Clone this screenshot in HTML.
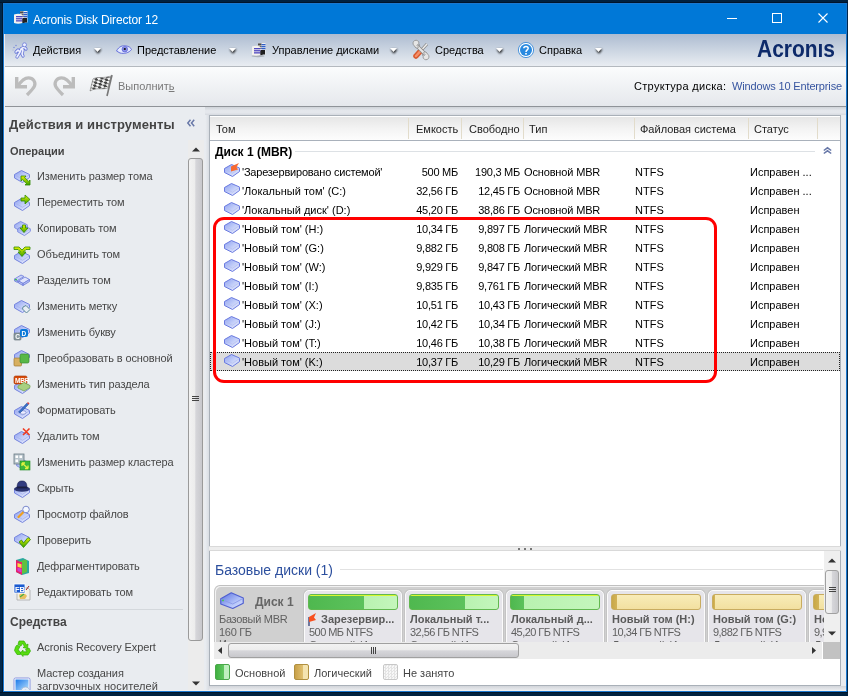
<!DOCTYPE html><html><head><meta charset="utf-8"><style>
*{margin:0;padding:0;box-sizing:border-box}
html,body{width:848px;height:696px;overflow:hidden;background:#00284c;font-family:"Liberation Sans",sans-serif;font-size:11px;color:#000;position:relative}
.a{position:absolute}
.t{position:absolute;white-space:nowrap;line-height:13px}
svg{position:absolute;overflow:visible}
.it{left:37px;color:#474747;letter-spacing:-0.1px}
.r{text-align:right}
.hd{color:#222}
.pc{position:absolute;width:98px;height:70px;background:#e6e5ea;border:1px solid #fbfbfb;border-radius:5px;box-shadow:0 0 0 1px #c4c4c4}
.bar{position:absolute;left:3px;top:3px;width:90px;height:16px;border-radius:3px}
.pn{position:absolute;left:4px;top:22px;font-weight:bold;color:#5a5a5a;font-size:11px;line-height:13px;white-space:nowrap}
.ps{position:absolute;left:4px;top:35px;color:#606060;line-height:13px;white-space:nowrap;letter-spacing:-0.55px}
</style></head><body><div style="position:absolute;left:0;top:0;width:848px;height:696px;overflow:hidden;will-change:transform">

<svg width="0" height="0" style="position:absolute">
<defs>
 <filter id="blr" x="-50%" y="-50%" width="200%" height="200%"><feGaussianBlur stdDeviation="0.9"/></filter>
 <linearGradient id="gs" x1="0" y1="0" x2="1" y2="1">
  <stop offset="0" stop-color="#8a9ef0"/><stop offset="0.5" stop-color="#c0ccf8"/><stop offset="1" stop-color="#eceffe"/>
 </linearGradient>
 <linearGradient id="gg" x1="0" y1="0" x2="0" y2="1">
  <stop offset="0" stop-color="#e8f400"/><stop offset="1" stop-color="#3aa000"/>
 </linearGradient>
 <symbol id="slab" viewBox="0 0 16 13" overflow="visible">
  <path d="M0.5 4.5 L7.5 0.5 L15.5 4.5 L15.5 7.5 L8.5 12.5 L0.5 8 Z" fill="url(#gs)" stroke="#7584de" stroke-width="1" stroke-linejoin="round"/>
  <path d="M1 5 L8.5 9.3 L15.5 4.8" fill="none" stroke="#aab4ec" stroke-width="0.8"/>
 </symbol>
 <symbol id="i-resize" overflow="visible"><use href="#slab" x="1" y="3" width="16" height="13"/>
  <path d="M8 9 L13 9 L11.6 10.4 L15.6 14.4 L17 13 L17 18 L12 18 L13.4 16.6 L9.4 12.6 L8 14 Z" fill="url(#gg)" stroke="#2f8a00" stroke-width="0.8"/></symbol>
 <symbol id="i-move" overflow="visible"><use href="#slab" x="1" y="5" width="16" height="13"/>
  <path d="M8 5 L12 5 L12 2 L17 6.5 L12 11 L12 8 L8 8 Z" fill="url(#gg)" stroke="#2f8a00" stroke-width="0.8"/></symbol>
 <symbol id="i-copy" overflow="visible"><use href="#slab" x="1" y="2" width="14" height="11"/><use href="#slab" x="4" y="6" width="14" height="11"/>
  <path d="M9.5 6 L12.5 6 L12.5 9 L15 9 L11 13.5 L7 9 L9.5 9 Z" fill="url(#gg)" stroke="#2f8a00" stroke-width="0.8"/></symbol>
 <symbol id="i-merge" overflow="visible"><use href="#slab" x="1" y="6" width="16" height="13"/>
  <path d="M1 2 L6 2 L9 5 L12 2 L17 2 L17 4.5 L13 4.5 L10.5 7 L13 7 L9 11.5 L5 7 L7.5 7 L5 4.5 L1 4.5 Z" fill="url(#gg)" stroke="#2f8a00" stroke-width="0.8"/></symbol>
 <symbol id="i-split" overflow="visible">
  <path d="M1.5 8 L8 4 L11 5.5 L4.5 9.5 Z" fill="#c9d2f8" stroke="#7482dc" stroke-width="0.9"/>
  <path d="M1.5 8 L4.5 9.5 L4.5 11.5 L1.5 10 Z" fill="#aab6ee" stroke="#7482dc" stroke-width="0.9"/>
  <path d="M5.5 10 L12 6 L16.5 8.5 L10 12.5 Z" fill="#dfe4fb" stroke="#7482dc" stroke-width="0.9"/>
  <path d="M5.5 10 L10 12.5 L10 14.5 L5.5 12 Z M10 12.5 L16.5 8.5 L16.5 10.5 L10 14.5 Z" fill="#b5c0f0" stroke="#7482dc" stroke-width="0.9"/>
  <circle cx="3" cy="8.6" r="0.9" fill="#3c3"/></symbol>
 <symbol id="i-label" overflow="visible"><use href="#slab" x="1" y="3" width="16" height="13"/>
  <path d="M10 10 L13 8.5 L17 12.5 L13.5 16 L9.5 12 Z" fill="#e8eef4" stroke="#5d8a98" stroke-width="1"/></symbol>
 <symbol id="i-letter" overflow="visible"><use href="#slab" x="1" y="2" width="16" height="13"/>
  <rect x="1" y="10" width="7" height="7" rx="1" fill="#8a9aa0" stroke="#5a6a70" stroke-width="0.6"/><text x="2.3" y="16" font-size="6.5" font-weight="bold" fill="#fff" font-family="Liberation Sans">C</text>
  <rect x="7" y="6" width="8" height="8" rx="2" fill="#0a78d8"/><text x="8.6" y="12.6" font-size="6.5" font-weight="bold" fill="#fff" font-family="Liberation Sans">D</text></symbol>
 <symbol id="i-convert" overflow="visible"><use href="#slab" x="1" y="1" width="16" height="13"/>
  <rect x="1" y="9" width="7.5" height="8" rx="1" fill="#d8b060" stroke="#a07830" stroke-width="0.7"/>
  <rect x="7" y="5" width="9" height="9" rx="1.5" fill="#58b848" stroke="#3a8a30" stroke-width="0.7"/></symbol>
 <symbol id="i-ptype" overflow="visible"><use href="#slab" x="1" y="6" width="16" height="13"/>
  <rect x="1" y="1" width="13" height="8" rx="1.5" fill="#d84a08" stroke="#a03000" stroke-width="0.6"/>
  <text x="2" y="8" font-size="6.6" font-weight="bold" fill="#fff" font-family="Liberation Sans" letter-spacing="-0.3">MBR</text>
  <path d="M5 11 L11 7.5 L17 10.5 L17 12.5 L11 16 L5 13 Z" fill="#a8d080" stroke="#78a850" stroke-width="0.8"/></symbol>
 <symbol id="i-format" overflow="visible"><use href="#slab" x="1" y="5" width="16" height="13"/>
  <ellipse cx="10" cy="11.5" rx="3" ry="1.8" fill="#eef" stroke="#8090d0" stroke-width="0.8"/>
  <path d="M5.5 11 L14 2 L15.5 3.5 L7 12 Z" fill="#3a70c8" stroke="#1d4a98" stroke-width="0.5"/><path d="M14 2 L15 1 L16.5 2.5 L15.5 3.5 Z" fill="#e04040"/></symbol>
 <symbol id="i-delete" overflow="visible"><use href="#slab" x="1" y="4" width="16" height="13"/>
  <path d="M10 1.5 L16.5 8 M16.5 1.5 L10 8" stroke="#f03a20" stroke-width="1.6" fill="none"/></symbol>
 <symbol id="i-cluster" overflow="visible"><use href="#slab" x="3" y="6" width="14" height="11"/>
  <rect x="1" y="1" width="10" height="10" fill="#b8c4cc" stroke="#6a7a84" stroke-width="0.8"/>
  <rect x="2.5" y="2.5" width="2.5" height="2.5" fill="#fff"/><rect x="6.5" y="2.5" width="2.5" height="2.5" fill="#fff"/><rect x="2.5" y="6.5" width="2.5" height="2.5" fill="#fff"/>
  <rect x="7" y="8" width="10" height="9" fill="#3cb83c" stroke="#208a20" stroke-width="0.6"/>
  <path d="M9 10 L15 15.5 M9 10 L12 10 M9 10 L9 13 M15 15.5 L12 15.5 M15 15.5 L15 12.5" stroke="#e0f040" stroke-width="1.3" fill="none"/></symbol>
 <symbol id="i-hide" overflow="visible"><use href="#slab" x="1" y="6" width="16" height="13"/>
  <ellipse cx="9" cy="10" rx="8" ry="2.8" fill="#2a3470"/>
  <path d="M4 9.5 C4 3 6 2 9 2 C12 2 14 3 14 9.5 Z" fill="#323c80" stroke="#1a2050" stroke-width="0.6"/>
  <path d="M4.2 7.5 L13.8 7.5 L13.9 9 L4.1 9 Z" fill="#1a1e40"/></symbol>
 <symbol id="i-browse" overflow="visible"><use href="#slab" x="1" y="5" width="16" height="13"/>
  <path d="M5.5 12 L10.5 7" stroke="#f0a020" stroke-width="2.2" stroke-linecap="round"/>
  <circle cx="13" cy="4.5" r="3.3" fill="#f4f8ff" stroke="#7a88cc" stroke-width="1"/></symbol>
 <symbol id="i-check" overflow="visible"><use href="#slab" x="1" y="2" width="16" height="13"/>
  <path d="M6 11 L8.5 9 L10.5 12 L15 6.5 L17.5 8.5 L10.5 16.5 Z" fill="url(#gg)" stroke="#2f8a00" stroke-width="0.8"/></symbol>
 <symbol id="i-defrag" overflow="visible">
  <path d="M3 3 L10 1 L16 4 L16 16 L9 18 L3 15 Z" fill="#2aa8a0"/>
  <path d="M3 3 L9 5 L9 18 L3 15 Z" fill="#e8206a"/>
  <path d="M5 5 L12 2.5 L14 3.5 L14 15 L9 17 L9 5 Z" fill="#60c040"/>
  <path d="M4.5 6 L8.5 7.2 L8.5 11 L4.5 9.8 Z" fill="#f8e040"/>
  <path d="M4.5 10.5 L8.5 11.7 L8.5 15.5 L4.5 14 Z" fill="#d040d0"/></symbol>
 <symbol id="i-edit" overflow="visible">
  <path d="M4 5 L15 5 L17 7 L17 17 L4 17 Z" fill="#f4f0e4" stroke="#a0a0a0" stroke-width="0.7"/>
  <path d="M6 12 C8 10 12 10 14 13 L12 16 L7 16 Z" fill="#e8c060"/><path d="M7 14 L11 11" stroke="#40b040" stroke-width="1.2"/>
  <rect x="1" y="1" width="11" height="9" fill="#1a5ad0" stroke="#fff" stroke-width="0.8"/>
  <text x="2" y="8.5" font-size="7.5" font-weight="bold" fill="#fff" font-family="Liberation Sans">FB</text>
  <path d="M13 7 L16 3" stroke="#a02020" stroke-width="1"/></symbol>
 <symbol id="i-recycle" overflow="visible">
  <g fill="#58dc10" stroke="#30b000" stroke-width="0.7">
  <path d="M6 3 L11 3 L13.5 7 L15 6 L14.5 10.5 L10 9.5 L11.5 8.6 L9.5 5.3 L8 8 L5 6.3 Z"/>
  <path d="M16 10 L17.5 13 L15 17 L10 17 L10 18.5 L7.2 15.2 L10 12 L10 13.8 L14 13.8 L12.5 11.5 Z"/>
  <path d="M2.5 9 L4 7 L7 8.5 L5 12 L7.5 14 L7.5 16.5 L4 16.5 L1.5 12.5 Z"/>
  </g></symbol>
 <symbol id="i-media" overflow="visible">
  <rect x="1" y="1" width="16" height="14" rx="1.5" fill="#fff" stroke="#8a96e0" stroke-width="1"/>
  <rect x="2.5" y="2.5" width="13" height="11" fill="url(#gm)"/>
  <circle cx="12.5" cy="14.5" r="4.5" fill="#e8eef8" stroke="#9ab0c8" stroke-width="0.7"/><circle cx="12.5" cy="14.5" r="1.5" fill="none" stroke="#9ab0c8" stroke-width="0.7"/></symbol>
 <linearGradient id="gdisk" x1="0" y1="0" x2="1" y2="1"><stop offset="0" stop-color="#5a70e0"/><stop offset="0.6" stop-color="#b0c0f8"/><stop offset="1" stop-color="#e0e8ff"/></linearGradient>
 <linearGradient id="gm" x1="0" y1="0" x2="1" y2="1"><stop offset="0" stop-color="#1a78e8"/><stop offset="1" stop-color="#b8e0ff"/></linearGradient>
 <linearGradient id="gvol" x1="0" y1="0" x2="1" y2="1">
  <stop offset="0" stop-color="#8a9ef0"/><stop offset="0.5" stop-color="#c0ccf8"/><stop offset="1" stop-color="#eceffe"/>
 </linearGradient>
 <symbol id="vol" overflow="visible">
  <path d="M0.5 4.5 L7.5 0.5 L15.5 4 L15.5 7.5 L8.5 12.5 L0.5 8.5 Z" fill="url(#gvol)" stroke="#6a7ae0" stroke-width="1" stroke-linejoin="round"/>
  <path d="M1 5.2 L8.5 9.3 L15.3 4.6" fill="none" stroke="#b4bdee" stroke-width="0.7"/>
 </symbol>
</defs></svg>

<div class="a" style="left:3px;top:3px;width:844px;height:689px;background:#e9ecf0;border:1px solid #1a78d0"></div>
<div class="a" style="left:4px;top:4px;width:842px;height:30px;background:#0078d7"></div>
<div class="t" style="left:33px;top:12.5px;color:#fff;font-size:12px;line-height:14px;letter-spacing:-0.15px">Acronis Disk Director 12</div>
<div class="a" style="left:4px;top:34px;width:842px;height:32px;background:linear-gradient(#adbcd1,#e9edf2)"></div>
<div class="a" style="left:4px;top:66px;width:842px;height:1px;background:#b4b9bf"></div>
<div class="a" style="left:4px;top:67px;width:842px;height:39px;background:linear-gradient(#fbfcfd,#e5e8ec)"></div>
<div class="a" style="left:4px;top:106px;width:842px;height:1px;background:#8f9398"></div>
<div class="t" style="left:33px;top:44px">Действия</div>
<div class="t" style="left:137px;top:44px">Представление</div>
<div class="t" style="left:272px;top:44px">Управление дисками</div>
<div class="t" style="left:435px;top:44px">Средства</div>
<div class="t" style="left:539px;top:44px">Справка</div>
<svg style="left:0;top:0" width="848" height="70"><text x="757" y="56.5" font-family="Liberation Sans" font-weight="bold" font-size="23" fill="#0d2a6a" textLength="78" lengthAdjust="spacingAndGlyphs">Acronıs</text></svg>
<div class="t" style="left:118px;top:80px;color:#7a7a7a">Выполнит<u>ь</u></div>
<div class="t" style="left:634px;top:80px;letter-spacing:0.3px">Структура диска:</div>
<div class="t" style="left:732px;top:80px;color:#3755a0;letter-spacing:-0.15px">Windows 10 Enterprise</div>
<svg style="left:14px;top:11px" width="14" height="13"><rect x="6" y="0" width="7.5" height="11.5" fill="#f0f0f0"/><rect x="6" y="0.5" width="3.5" height="1.3" fill="#222"/><rect x="6" y="2.6" width="3.5" height="1.3" fill="#222"/><rect x="6" y="4.7" width="3.5" height="1.3" fill="#222"/><rect x="9.5" y="1" width="4" height="1.3" fill="#2f5fc8"/><rect x="9.5" y="3" width="4" height="1.3" fill="#2f5fc8"/><rect x="9.5" y="5" width="4" height="1.3" fill="#2f5fc8"/><rect x="8" y="7" width="5" height="4.5" fill="#1e1e1e"/><path d="M0 3.5 Q4 2 8.5 3.5 L8.5 12 Q4 13.5 0 12 Z" fill="#f4f2ee"/><rect x="2" y="5" width="6.5" height="1.3" fill="#5048c0"/><rect x="2" y="7.1" width="6.5" height="1.3" fill="#5048c0"/><rect x="2" y="9.2" width="6.5" height="1.3" fill="#5048c0"/><rect x="8.5" y="8" width="2" height="4" fill="#222"/></svg>
<div class="a" style="left:727px;top:18px;width:10px;height:1px;background:#fff"></div>
<div class="a" style="left:772px;top:13px;width:10px;height:10px;border:1px solid #fff"></div>
<svg style="left:818px;top:13px" width="10" height="10"><path d="M0.5 0.5 L9.5 9.5 M9.5 0.5 L0.5 9.5" stroke="#fff" stroke-width="1.1"/></svg>
<svg style="left:12px;top:42px" width="16" height="16"><g fill="none" stroke-linecap="round" stroke-linejoin="round"><path d="M5 15 L8 10 L9 7 L11 8 L10 12 L11 14 M8 10 L6 8 L4 10 M9 7 L12 5 L14 7" stroke="#6a7ad8" stroke-width="3.2"/><path d="M5 15 L8 10 L9 7 L11 8 L10 12 L11 14 M8 10 L6 8 L4 10 M9 7 L12 5 L14 7" stroke="#eef0ff" stroke-width="1.6"/></g><circle cx="12.5" cy="2.8" r="2" fill="#eef0ff" stroke="#6a7ad8" stroke-width="0.8"/><circle cx="4" cy="3.5" r="0.8" fill="#8090d8"/><circle cx="2" cy="5.5" r="0.8" fill="#8090d8"/><circle cx="1" cy="8" r="0.6" fill="#a0a8e0"/></svg>
<svg style="left:116px;top:45px" width="16" height="9"><path d="M0.5 6 C3 1 7 0.5 9.5 0.8 C13 1.2 15 3 15.5 4.5 C13 8 8 9 4 8 Z" fill="#e4eaff" stroke="#5a64d8" stroke-width="0.9"/><circle cx="8.8" cy="4.2" r="2.8" fill="#8a90e8" stroke="#5058d0" stroke-width="0.6"/><circle cx="8.8" cy="4" r="1.1" fill="#111"/></svg>
<svg style="left:252px;top:43px" width="14" height="14"><ellipse cx="6" cy="13" rx="6.5" ry="1.2" fill="#8a9098" opacity="0.6"/><rect x="6" y="0" width="7.5" height="11.5" fill="#f0f0f0"/><rect x="6" y="0.5" width="3.5" height="1.3" fill="#222"/><rect x="6" y="2.6" width="3.5" height="1.3" fill="#222"/><rect x="6" y="4.7" width="3.5" height="1.3" fill="#222"/><rect x="9.5" y="1" width="4" height="1.3" fill="#2f5fc8"/><rect x="9.5" y="3" width="4" height="1.3" fill="#2f5fc8"/><rect x="9.5" y="5" width="4" height="1.3" fill="#2f5fc8"/><rect x="8" y="7" width="5" height="4.5" fill="#1e1e1e"/><path d="M0 3.5 Q4 2 8.5 3.5 L8.5 12 Q4 13.5 0 12 Z" fill="#f4f2ee"/><rect x="2" y="5" width="6.5" height="1.3" fill="#5048c0"/><rect x="2" y="7.1" width="6.5" height="1.3" fill="#5048c0"/><rect x="2" y="9.2" width="6.5" height="1.3" fill="#5048c0"/><rect x="8.5" y="8" width="2" height="4" fill="#222"/></svg>
<svg style="left:413px;top:42px" width="16" height="16"><path d="M14 2 L8.5 8" stroke="#8a8a8a" stroke-width="3"/><path d="M14 2 L8.5 8" stroke="#eee" stroke-width="1.5"/><path d="M7.5 9 L3 14" stroke="#d85a30" stroke-width="5.5" stroke-linecap="round"/><path d="M7.5 9 L3 14" stroke="#f6906a" stroke-width="2.5" stroke-linecap="round"/><path d="M3.5 3.5 L12.5 12.5" stroke="#8a8a8a" stroke-width="3.8" stroke-linecap="round"/><path d="M3.5 3.5 L12.5 12.5" stroke="#e6e6e6" stroke-width="2.2" stroke-linecap="round"/><path d="M1 3.5 A3 3 0 1 1 6 1.2 L4 3.5 L4.5 4.2 L6.5 2.5 A3 3 0 0 1 3 6 Z" fill="#e6e6e6" stroke="#8a8a8a" stroke-width="0.8"/><path d="M15 12.5 A3 3 0 1 1 10 14.8 L12 12.5 L11.5 11.8 L9.5 13.5 A3 3 0 0 1 13 10 Z" fill="#e6e6e6" stroke="#8a8a8a" stroke-width="0.8"/></svg>
<svg style="left:518px;top:42px" width="16" height="16"><circle cx="8" cy="8" r="7.6" fill="#fff" stroke="#3a8ad8" stroke-width="0.9"/><circle cx="8" cy="8" r="6" fill="#2a8ae0"/><path d="M5.8 6.2 C5.8 3.8 10.2 3.8 10.2 6.2 C10.2 7.8 8 8 8 10" fill="none" stroke="#fff" stroke-width="1.5"/><rect x="7.2" y="11" width="1.6" height="1.6" fill="#fff"/></svg>
<svg style="left:94px;top:48px" width="9" height="6"><path d="M0.5 1.2 L7.5 1.2 L4 5.8 Z" fill="#000" opacity="0.95" filter="url(#blr)"/><path d="M0 0 L7 0 L3.5 4 Z" fill="#fff"/></svg>
<svg style="left:229px;top:48px" width="9" height="6"><path d="M0.5 1.2 L7.5 1.2 L4 5.8 Z" fill="#000" opacity="0.95" filter="url(#blr)"/><path d="M0 0 L7 0 L3.5 4 Z" fill="#fff"/></svg>
<svg style="left:390px;top:48px" width="9" height="6"><path d="M0.5 1.2 L7.5 1.2 L4 5.8 Z" fill="#000" opacity="0.95" filter="url(#blr)"/><path d="M0 0 L7 0 L3.5 4 Z" fill="#fff"/></svg>
<svg style="left:496px;top:48px" width="9" height="6"><path d="M0.5 1.2 L7.5 1.2 L4 5.8 Z" fill="#000" opacity="0.95" filter="url(#blr)"/><path d="M0 0 L7 0 L3.5 4 Z" fill="#fff"/></svg>
<svg style="left:595px;top:48px" width="9" height="6"><path d="M0.5 1.2 L7.5 1.2 L4 5.8 Z" fill="#000" opacity="0.95" filter="url(#blr)"/><path d="M0 0 L7 0 L3.5 4 Z" fill="#fff"/></svg>
<svg style="left:15px;top:76px" width="22" height="20"><path d="M2.5 10.5 C6 5 9 1.8 13.5 1.8 C18 1.8 21 6 19.5 10 C18.5 12.5 15.5 15.5 12 19" fill="none" stroke="#bcbcbc" stroke-width="3.3"/><path d="M0 1 L3.4 1 L3.4 9 L12 9 L12 12.4 L0 12.4 Z" fill="#bcbcbc"/></svg>
<svg style="left:53px;top:76px" width="22" height="20"><g transform="translate(22,0) scale(-1,1)"><path d="M2.5 10.5 C6 5 9 1.8 13.5 1.8 C18 1.8 21 6 19.5 10 C18.5 12.5 15.5 15.5 12 19" fill="none" stroke="#bcbcbc" stroke-width="3.3"/><path d="M0 1 L3.4 1 L3.4 9 L12 9 L12 12.4 L0 12.4 Z" fill="#bcbcbc"/></g></svg>
<svg style="left:90px;top:74px" width="24" height="23"><defs><pattern id="chk" width="5.6" height="5.6" patternUnits="userSpaceOnUse" patternTransform="rotate(-15) skewX(25)"><rect width="5.6" height="5.6" fill="#f2f2f2"/><rect width="2.8" height="2.8" fill="#454545"/><rect x="2.8" y="2.8" width="2.8" height="2.8" fill="#454545"/></pattern></defs><path d="M3 5 C8 2 12 5 21 2 L18 14 C11 16 7 13 0 17 Z" fill="url(#chk)" stroke="#777" stroke-width="0.6"/><path d="M22 1 L17 22" stroke="#777" stroke-width="1.6"/></svg>
<div class="a" style="left:203px;top:107px;width:6px;height:584px;background:linear-gradient(90deg,rgba(233,236,240,0) 0,rgba(233,236,240,0) 40%,#d9dde3 100%)"></div>
<svg style="left:187px;top:119px" width="8" height="8"><path d="M3.5 0.8 L0.8 4 L3.5 7.2 M7.2 0.8 L4.5 4 L7.2 7.2" fill="none" stroke="#6878a8" stroke-width="1.5"/></svg>
<div class="a" style="left:188px;top:140px;width:16px;height:551px;background:#ececec"></div>
<svg style="left:192px;top:147px" width="8" height="5"><path d="M0 4.5 L4 0.5 L8 4.5 Z" fill="#333"/></svg>
<div class="a" style="left:188px;top:158px;width:15px;height:483px;background:linear-gradient(90deg,#f2f2f2 0,#ececec 45%,#d6d6da 52%,#c8c8cc 100%);border:1px solid #9a9a9a;border-radius:3px"></div>
<div class="a" style="left:192px;top:396px;width:7px;height:6px;background:repeating-linear-gradient(#444 0 1px,transparent 1px 2px)"></div>
<svg style="left:192px;top:681px" width="8" height="5"><path d="M0 0.5 L4 4.5 L8 0.5 Z" fill="#333"/></svg>
<div class="a" style="left:205px;top:107px;width:641px;height:8px;background:linear-gradient(#cfd3d8,#e4e7ec 45%,#e4e7ec 70%,#d6dae0)"></div>
<div class="t" style="left:9px;top:117px;font-weight:bold;font-size:13px;line-height:15px;color:#444;letter-spacing:0.1px">Действия и инструменты</div>
<div class="t" style="left:10px;top:145px;font-weight:bold;color:#444">Операции</div>
<svg style="left:13px;top:167px" width="18" height="18"><use href="#i-resize"/></svg><div class="t it" style="top:170px">Изменить размер тома</div>
<svg style="left:13px;top:193px" width="18" height="18"><use href="#i-move"/></svg><div class="t it" style="top:196px">Переместить том</div>
<svg style="left:13px;top:219px" width="18" height="18"><use href="#i-copy"/></svg><div class="t it" style="top:222px">Копировать том</div>
<svg style="left:13px;top:245px" width="18" height="18"><use href="#i-merge"/></svg><div class="t it" style="top:248px">Объединить том</div>
<svg style="left:13px;top:271px" width="18" height="18"><use href="#i-split"/></svg><div class="t it" style="top:274px">Разделить том</div>
<svg style="left:13px;top:297px" width="18" height="18"><use href="#i-label"/></svg><div class="t it" style="top:300px">Изменить метку</div>
<svg style="left:13px;top:323px" width="18" height="18"><use href="#i-letter"/></svg><div class="t it" style="top:326px">Изменить букву</div>
<svg style="left:13px;top:349px" width="18" height="18"><use href="#i-convert"/></svg><div class="t it" style="top:352px">Преобразовать в основной</div>
<svg style="left:13px;top:375px" width="18" height="18"><use href="#i-ptype"/></svg><div class="t it" style="top:378px">Изменить тип раздела</div>
<svg style="left:13px;top:401px" width="18" height="18"><use href="#i-format"/></svg><div class="t it" style="top:404px">Форматировать</div>
<svg style="left:13px;top:427px" width="18" height="18"><use href="#i-delete"/></svg><div class="t it" style="top:430px">Удалить том</div>
<svg style="left:13px;top:453px" width="18" height="18"><use href="#i-cluster"/></svg><div class="t it" style="top:456px">Изменить размер кластера</div>
<svg style="left:13px;top:479px" width="18" height="18"><use href="#i-hide"/></svg><div class="t it" style="top:482px">Скрыть</div>
<svg style="left:13px;top:505px" width="18" height="18"><use href="#i-browse"/></svg><div class="t it" style="top:508px">Просмотр файлов</div>
<svg style="left:13px;top:531px" width="18" height="18"><use href="#i-check"/></svg><div class="t it" style="top:534px">Проверить</div>
<svg style="left:13px;top:557px" width="18" height="18"><use href="#i-defrag"/></svg><div class="t it" style="top:560px">Дефрагментировать</div>
<svg style="left:13px;top:583px" width="18" height="18"><use href="#i-edit"/></svg><div class="t it" style="top:586px">Редактировать том</div>
<div class="a" style="left:8px;top:609px;width:175px;height:1px;background:#d4d8dc"></div>
<div class="t" style="left:10px;top:615px;font-weight:bold;font-size:12px;line-height:14px;color:#444">Средства</div>
<svg style="left:13px;top:638px" width="18" height="18"><use href="#i-recycle"/></svg><div class="t it" style="top:641px">Acronis Recovery Expert</div>
<svg style="left:13px;top:677px" width="18" height="18"><use href="#i-media"/></svg><div class="t it" style="top:667px">Мастер создания</div><div class="t it" style="top:680px;letter-spacing:0.1px">загрузочных носителей</div>
<div class="a" style="left:209px;top:115px;width:632px;height:432px;background:#fff;border:1px solid #a9b0b8"></div>
<div class="a" style="left:210px;top:116px;width:630px;height:25px;background:linear-gradient(#fff 0,#fff 1px,#e6e6e6 1px,#f4f4f4 55%,#fdfdfd 100%);border-bottom:1px solid #a9b1bb"></div>
<div class="a" style="left:408px;top:118px;width:1px;height:21px;background:#e2dccb"></div>
<div class="a" style="left:461px;top:118px;width:1px;height:21px;background:#e2dccb"></div>
<div class="a" style="left:523px;top:118px;width:1px;height:21px;background:#e2dccb"></div>
<div class="a" style="left:634px;top:118px;width:1px;height:21px;background:#e2dccb"></div>
<div class="a" style="left:748px;top:118px;width:1px;height:21px;background:#e2dccb"></div>
<div class="a" style="left:817px;top:118px;width:1px;height:21px;background:#e2dccb"></div>
<div class="t hd" style="left:216px;top:123px">Том</div>
<div class="t hd" style="left:416px;top:123px">Емкость</div>
<div class="t hd" style="left:469px;top:123px">Свободно</div>
<div class="t hd" style="left:529px;top:123px">Тип</div>
<div class="t hd" style="left:640px;top:123px">Файловая система</div>
<div class="t hd" style="left:754px;top:123px">Статус</div>
<div class="t" style="left:215px;top:145px;font-weight:bold;font-size:12px;line-height:14px">Диск 1 (MBR)</div>
<svg style="left:823px;top:147px" width="9" height="7"><path d="M0.8 3.5 L4.5 0.8 L8.2 3.5 M0.8 6.5 L4.5 3.8 L8.2 6.5" fill="none" stroke="#6878a8" stroke-width="1.5"/></svg>
<div class="a" style="left:295px;top:151px;width:520px;height:1px;background:#dde1e5"></div>
<svg style="left:224px;top:164px" width="16" height="13"><use href="#vol"/></svg>
<svg style="left:231px;top:163px" width="9" height="9"><path d="M0 3.5 L8 0 L5.5 4 L7 6.5 L0 8.5 Z" fill="#f86a30"/></svg>
<div class="t" style="left:242px;top:166px;letter-spacing:-0.2px">'Зарезервировано системой'</div>
<div class="t r" style="left:398px;width:60px;top:166px;letter-spacing:-0.25px">500 МБ</div>
<div class="t r" style="left:460px;width:60px;top:166px;letter-spacing:-0.25px">190,3 МБ</div>
<div class="t" style="left:524px;top:166px;letter-spacing:-0.15px">Основной MBR</div>
<div class="t" style="left:635px;top:166px">NTFS</div>
<div class="t" style="left:750px;top:166px">Исправен ...</div>
<svg style="left:224px;top:183px" width="16" height="13"><use href="#vol"/></svg>
<div class="t" style="left:242px;top:185px">'Локальный том' (C:)</div>
<div class="t r" style="left:398px;width:60px;top:185px;letter-spacing:-0.25px">32,56 ГБ</div>
<div class="t r" style="left:460px;width:60px;top:185px;letter-spacing:-0.25px">12,45 ГБ</div>
<div class="t" style="left:524px;top:185px;letter-spacing:-0.15px">Основной MBR</div>
<div class="t" style="left:635px;top:185px">NTFS</div>
<div class="t" style="left:750px;top:185px">Исправен ...</div>
<svg style="left:224px;top:202px" width="16" height="13"><use href="#vol"/></svg>
<div class="t" style="left:242px;top:204px">'Локальный диск' (D:)</div>
<div class="t r" style="left:398px;width:60px;top:204px;letter-spacing:-0.25px">45,20 ГБ</div>
<div class="t r" style="left:460px;width:60px;top:204px;letter-spacing:-0.25px">38,86 ГБ</div>
<div class="t" style="left:524px;top:204px;letter-spacing:-0.15px">Основной MBR</div>
<div class="t" style="left:635px;top:204px">NTFS</div>
<div class="t" style="left:750px;top:204px">Исправен</div>
<svg style="left:224px;top:221px" width="16" height="13"><use href="#vol"/></svg>
<div class="t" style="left:242px;top:223px">'Новый том' (H:)</div>
<div class="t r" style="left:398px;width:60px;top:223px;letter-spacing:-0.25px">10,34 ГБ</div>
<div class="t r" style="left:460px;width:60px;top:223px;letter-spacing:-0.25px">9,897 ГБ</div>
<div class="t" style="left:524px;top:223px;letter-spacing:-0.15px">Логический MBR</div>
<div class="t" style="left:635px;top:223px">NTFS</div>
<div class="t" style="left:750px;top:223px">Исправен</div>
<svg style="left:224px;top:240px" width="16" height="13"><use href="#vol"/></svg>
<div class="t" style="left:242px;top:242px">'Новый том' (G:)</div>
<div class="t r" style="left:398px;width:60px;top:242px;letter-spacing:-0.25px">9,882 ГБ</div>
<div class="t r" style="left:460px;width:60px;top:242px;letter-spacing:-0.25px">9,808 ГБ</div>
<div class="t" style="left:524px;top:242px;letter-spacing:-0.15px">Логический MBR</div>
<div class="t" style="left:635px;top:242px">NTFS</div>
<div class="t" style="left:750px;top:242px">Исправен</div>
<svg style="left:224px;top:259px" width="16" height="13"><use href="#vol"/></svg>
<div class="t" style="left:242px;top:261px">'Новый том' (W:)</div>
<div class="t r" style="left:398px;width:60px;top:261px;letter-spacing:-0.25px">9,929 ГБ</div>
<div class="t r" style="left:460px;width:60px;top:261px;letter-spacing:-0.25px">9,847 ГБ</div>
<div class="t" style="left:524px;top:261px;letter-spacing:-0.15px">Логический MBR</div>
<div class="t" style="left:635px;top:261px">NTFS</div>
<div class="t" style="left:750px;top:261px">Исправен</div>
<svg style="left:224px;top:278px" width="16" height="13"><use href="#vol"/></svg>
<div class="t" style="left:242px;top:280px">'Новый том' (I:)</div>
<div class="t r" style="left:398px;width:60px;top:280px;letter-spacing:-0.25px">9,835 ГБ</div>
<div class="t r" style="left:460px;width:60px;top:280px;letter-spacing:-0.25px">9,761 ГБ</div>
<div class="t" style="left:524px;top:280px;letter-spacing:-0.15px">Логический MBR</div>
<div class="t" style="left:635px;top:280px">NTFS</div>
<div class="t" style="left:750px;top:280px">Исправен</div>
<svg style="left:224px;top:297px" width="16" height="13"><use href="#vol"/></svg>
<div class="t" style="left:242px;top:299px">'Новый том' (X:)</div>
<div class="t r" style="left:398px;width:60px;top:299px;letter-spacing:-0.25px">10,51 ГБ</div>
<div class="t r" style="left:460px;width:60px;top:299px;letter-spacing:-0.25px">10,43 ГБ</div>
<div class="t" style="left:524px;top:299px;letter-spacing:-0.15px">Логический MBR</div>
<div class="t" style="left:635px;top:299px">NTFS</div>
<div class="t" style="left:750px;top:299px">Исправен</div>
<svg style="left:224px;top:316px" width="16" height="13"><use href="#vol"/></svg>
<div class="t" style="left:242px;top:318px">'Новый том' (J:)</div>
<div class="t r" style="left:398px;width:60px;top:318px;letter-spacing:-0.25px">10,42 ГБ</div>
<div class="t r" style="left:460px;width:60px;top:318px;letter-spacing:-0.25px">10,34 ГБ</div>
<div class="t" style="left:524px;top:318px;letter-spacing:-0.15px">Логический MBR</div>
<div class="t" style="left:635px;top:318px">NTFS</div>
<div class="t" style="left:750px;top:318px">Исправен</div>
<svg style="left:224px;top:335px" width="16" height="13"><use href="#vol"/></svg>
<div class="t" style="left:242px;top:337px">'Новый том' (T:)</div>
<div class="t r" style="left:398px;width:60px;top:337px;letter-spacing:-0.25px">10,46 ГБ</div>
<div class="t r" style="left:460px;width:60px;top:337px;letter-spacing:-0.25px">10,38 ГБ</div>
<div class="t" style="left:524px;top:337px;letter-spacing:-0.15px">Логический MBR</div>
<div class="t" style="left:635px;top:337px">NTFS</div>
<div class="t" style="left:750px;top:337px">Исправен</div>
<div class="a" style="left:210px;top:352px;width:630px;height:19px;background:#dcdcdc;border:1px dotted #222"></div>
<svg style="left:224px;top:354px" width="16" height="13"><use href="#vol"/></svg>
<div class="t" style="left:242px;top:356px">'Новый том' (K:)</div>
<div class="t r" style="left:398px;width:60px;top:356px;letter-spacing:-0.25px">10,37 ГБ</div>
<div class="t r" style="left:460px;width:60px;top:356px;letter-spacing:-0.25px">10,29 ГБ</div>
<div class="t" style="left:524px;top:356px;letter-spacing:-0.15px">Логический MBR</div>
<div class="t" style="left:635px;top:356px">NTFS</div>
<div class="t" style="left:750px;top:356px">Исправен</div>
<div class="a" style="left:213px;top:217px;width:504px;height:166px;border:3px solid #ff0000;border-radius:11px"></div>
<div class="a" style="left:209px;top:546px;width:632px;height:5px;background:#ededed;border-top:1px solid #d9d9d9;border-bottom:1px solid #d9d9d9"></div>
<div class="a" style="left:518px;top:548px;width:2px;height:2px;background:#777"></div><div class="a" style="left:524px;top:548px;width:2px;height:2px;background:#777"></div><div class="a" style="left:530px;top:548px;width:2px;height:2px;background:#777"></div>
<div class="a" style="left:209px;top:551px;width:632px;height:135px;background:#fff;border:1px solid #a9b0b8;border-top:none"></div>
<div class="t" style="left:215px;top:562px;font-size:14px;line-height:16px;color:#2c4f9e">Базовые диски (1)</div>
<div class="a" style="left:340px;top:569px;width:483px;height:1px;background:#e2e2e2"></div>
<div class="a" style="left:214px;top:585px;width:610px;height:57px;overflow:hidden">
<div class="a" style="left:0;top:0;width:640px;height:70px;background:#d0d0d0;border-top:1px solid #c0c0c0;border-left:1px solid #c8c8c8;border-radius:6px 0 0 0;box-shadow:inset 1px 1px 0 #f2f2f2"></div>
<svg style="left:6px;top:7px" width="24" height="17"><g transform="scale(1.5)"><path d="M0.5 4.5 L7.5 0.5 L15.5 4 L15.5 7.5 L8.5 11 L0.5 8 Z" fill="url(#gdisk)" stroke="#5060d0" stroke-width="0.8" stroke-linejoin="round"/><path d="M0.8 4.8 L8.5 8 L15.3 4.3" fill="none" stroke="#8a9ae8" stroke-width="0.6"/><circle cx="2" cy="5.6" r="0.6" fill="#40d040"/></g></svg>
<div class="t" style="left:41px;top:10px;font-weight:bold;font-size:12px;line-height:14px;color:#666">Диск 1</div>
<div class="t" style="left:5px;top:28px;color:#606060;letter-spacing:-0.3px">Базовый MBR</div>
<div class="t" style="left:5px;top:41px;color:#606060;letter-spacing:-0.3px">160 ГБ</div>
<div class="t" style="left:5px;top:53px;color:#606060">Исправен</div>
<div class="pc" style="left:90px;top:5px">
<div class="bar" style="background:linear-gradient(#d8f830 0,#d8f830 1px,transparent 1px),linear-gradient(90deg,#4fb84f 0,#5cc25c 62%,#b8f2b0 62%,#c4f6bc 100%);border:1px solid #62b850"></div>
<svg style="left:3px;top:22px" width="9" height="14"><path d="M1 13 L1 4" stroke="#20306a" stroke-width="1.2"/><path d="M1 4 L8 0 L6 4.5 L8 7 L1 9 Z" fill="#f85020"/></svg>
<div class="pn" style="left:16px">Зарезервир...</div>
<div class="ps">500 МБ NTFS</div><div class="ps" style="top:48px">Основной; Исправен</div></div>
<div class="pc" style="left:191px;top:5px">
<div class="bar" style="background:linear-gradient(#d8f830 0,#d8f830 1px,transparent 1px),linear-gradient(90deg,#4fb84f 0,#5cc25c 62%,#b8f2b0 62%,#c4f6bc 100%);border:1px solid #62b850"></div>
<div class="pn">Локальный т...</div>
<div class="ps">32,56 ГБ NTFS</div><div class="ps" style="top:48px">Основной; Исправен</div></div>
<div class="pc" style="left:292px;top:5px">
<div class="bar" style="background:linear-gradient(#d8f830 0,#d8f830 1px,transparent 1px),linear-gradient(90deg,#4fb84f 0,#5cc25c 15%,#b8f2b0 15%,#c4f6bc 100%);border:1px solid #62b850"></div>
<div class="pn">Локальный д...</div>
<div class="ps">45,20 ГБ NTFS</div><div class="ps" style="top:48px">Основной; Исправен</div></div>
<div class="pc" style="left:393px;top:5px">
<div class="bar" style="background:linear-gradient(90deg,#c8a848 0,#d4b458 6%,transparent 6%),linear-gradient(#f8ecb8,#f2e0a0);border:1px solid #c8ac60"></div>
<div class="pn">Новый том (H:)</div>
<div class="ps">10,34 ГБ NTFS</div><div class="ps" style="top:48px">Логический; Исправен</div></div>
<div class="pc" style="left:494px;top:5px">
<div class="bar" style="background:linear-gradient(90deg,#c8a848 0,#d4b458 2%,transparent 2%),linear-gradient(#f8ecb8,#f2e0a0);border:1px solid #c8ac60"></div>
<div class="pn">Новый том (G:)</div>
<div class="ps">9,882 ГБ NTFS</div><div class="ps" style="top:48px">Логический; Исправен</div></div>
<div class="pc" style="left:595px;top:5px">
<div class="bar" style="background:linear-gradient(90deg,#c8a848 0,#d4b458 6%,transparent 6%),linear-gradient(#f8ecb8,#f2e0a0);border:1px solid #c8ac60"></div>
<div class="pn">Новый том (W:)</div>
<div class="ps">9,929 ГБ NTFS</div><div class="ps" style="top:48px">Логический; Исправен</div></div>
</div>
<div class="a" style="left:214px;top:642px;width:608px;height:17px;background:#ececec"></div>
<svg style="left:218px;top:647px" width="5" height="8"><path d="M4 0 L0 3.5 L4 7 Z" fill="#333"/></svg>
<div class="a" style="left:228px;top:643px;width:291px;height:15px;background:linear-gradient(#f2f2f2 0,#ececec 45%,#d6d6da 52%,#c8c8cc 100%);border:1px solid #a0a0a0;border-radius:3px"></div>
<div class="a" style="left:371px;top:647px;width:6px;height:7px;background:repeating-linear-gradient(90deg,#444 0 1px,transparent 1px 2px)"></div>
<svg style="left:812px;top:647px" width="5" height="8"><path d="M0 0 L4 3.5 L0 7 Z" fill="#333"/></svg>
<div class="a" style="left:823px;top:642px;width:17px;height:17px;background:#c2c2c2"></div>
<div class="a" style="left:824px;top:551px;width:16px;height:91px;background:#efefef"></div>
<svg style="left:828px;top:558px" width="8" height="5"><path d="M0 4.5 L4 0.5 L8 4.5 Z" fill="#333"/></svg>
<div class="a" style="left:825px;top:570px;width:14px;height:44px;background:linear-gradient(90deg,#f2f2f2 0,#ececec 45%,#d6d6da 52%,#c8c8cc 100%);border:1px solid #a0a0a0;border-radius:3px"></div>
<div class="a" style="left:829px;top:587px;width:7px;height:6px;background:repeating-linear-gradient(#444 0 1px,transparent 1px 2px)"></div>
<svg style="left:828px;top:631px" width="8" height="5"><path d="M0 0.5 L4 4.5 L8 0.5 Z" fill="#333"/></svg>
<div class="a" style="left:215px;top:664px;width:15px;height:16px;background:linear-gradient(90deg,#40b040 0,#60c860 60%,#c0f0c0 60%);border:1px solid #4aa84a;border-radius:2px"></div>
<div class="t" style="left:235px;top:667px;color:#444">Основной</div>
<div class="a" style="left:294px;top:664px;width:15px;height:16px;background:linear-gradient(90deg,#c8a048 0,#e0c070 60%,#f4e4b0 60%);border:1px solid #b09040;border-radius:2px"></div>
<div class="t" style="left:314px;top:667px;color:#444">Логический</div>
<div class="a" style="left:383px;top:664px;width:15px;height:16px;background:repeating-conic-gradient(#e4e4e4 0 25%,#f8f8f8 0 50%) 0 0/3px 3px;border:1px solid #c8c8c8;border-radius:2px"></div>
<div class="t" style="left:403px;top:667px;color:#444">Не занято</div>
<div class="a" style="left:209px;top:686px;width:637px;height:5px;background:linear-gradient(#d2d5da,#e6e8eb 75%,#f4f1ee 80%)"></div>
<div class="a" style="left:4px;top:690px;width:842px;height:1px;background:#f2f0ee"></div>
<div class="a" style="left:3px;top:691px;width:844px;height:1px;background:#1a78d0"></div><div class="a" style="left:0;top:692px;width:848px;height:4px;background:#00223f"></div><div class="a" style="left:0;top:692px;width:848px;height:1px;background:#001426"></div>
<div class="a" style="left:0;top:0;width:848px;height:2px;background:#00213f"></div><div class="a" style="left:0;top:2px;width:848px;height:1px;background:#00142a"></div>
<div class="a" style="left:2px;top:2px;width:1px;height:691px;background:#00182e"></div><div class="a" style="left:4px;top:34px;width:1px;height:657px;background:#eef0f3"></div>
</div></body></html>
